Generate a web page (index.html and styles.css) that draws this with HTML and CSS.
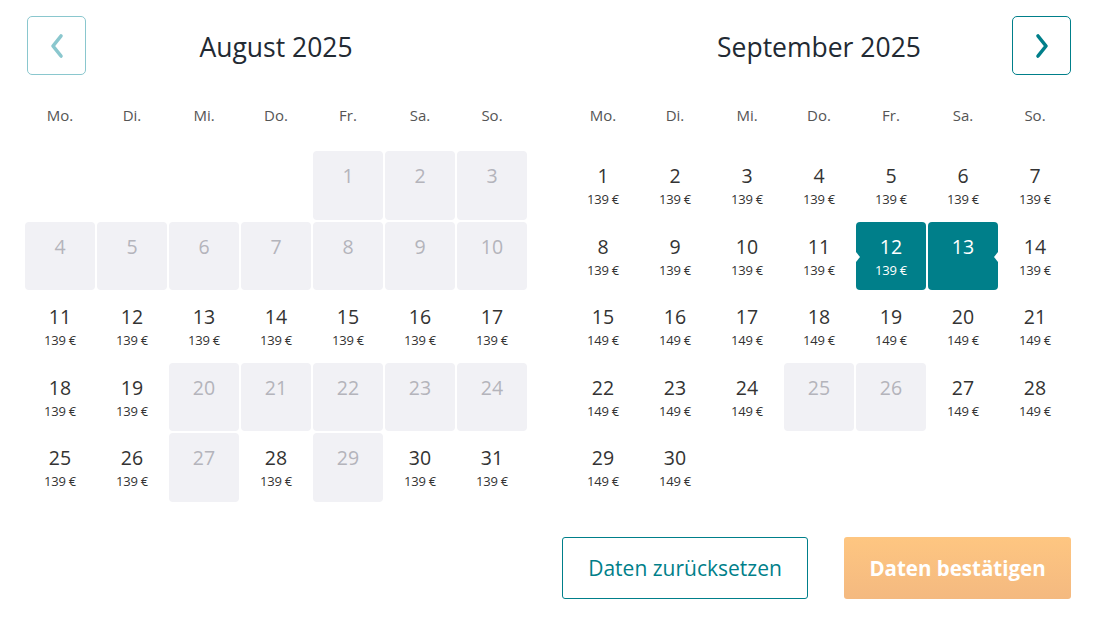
FILE: index.html
```html
<!DOCTYPE html>
<html>
<head>
    <meta charset="utf-8" />
    <title>Datum wählen</title>
    <link rel="stylesheet" href="styles.css">
</head>
<body>
    <div class="picker">
        <div class="months">
            <div class="month">
                <div class="kopf">
                    <button class="nav nav-prev" aria-label="Vorheriger Monat">
                        <svg width="16" height="26" viewBox="0 0 16 26"><path d="M12 3 L4 13 L12 23" fill="none" stroke="currentColor" stroke-width="3.6" stroke-linecap="round" stroke-linejoin="round"/></svg>
                    </button>
                    <div class="titel">August 2025</div>
                    <div class="platz"></div>
                </div>
                <div class="wochentage">
                    <span>Mo.</span><span>Di.</span><span>Mi.</span><span>Do.</span><span>Fr.</span><span>Sa.</span><span>So.</span>
                </div>
                <div class="tage" id="august"></div>
            </div>
            <div class="month">
                <div class="kopf">
                    <div class="platz"></div>
                    <div class="titel">September 2025</div>
                    <button class="nav nav-next" aria-label="Nächster Monat">
                        <svg width="16" height="26" viewBox="0 0 16 26"><path d="M4 3 L12 13 L4 23" fill="none" stroke="currentColor" stroke-width="3.6" stroke-linecap="round" stroke-linejoin="round"/></svg>
                    </button>
                </div>
                <div class="wochentage">
                    <span>Mo.</span><span>Di.</span><span>Mi.</span><span>Do.</span><span>Fr.</span><span>Sa.</span><span>So.</span>
                </div>
                <div class="tage" id="september"></div>
            </div>
        </div>
        <div class="aktionen">
            <button class="knopf knopf-reset">Daten zurücksetzen</button>
            <button class="knopf knopf-ok">Daten bestätigen</button>
        </div>
    </div>
    <script src="script.js"></script>
</body>
</html>
```

FILE: styles.css
```css
* {
    box-sizing: border-box;
}

html {
    font-family: "Open Sans", "Noto Sans", sans-serif;
    background-color: #ffffff;
    color: #333333;
}

body {
    margin: 0;
}

.picker {
    padding: 16px 45px 0 24px;
}

.months {
    display: flex;
    gap: 39px;
}

.month {
    width: 504px;
}

.kopf {
    display: grid;
    grid-template-columns: 62px 1fr 62px;
    align-items: center;
    height: 59px;
}

.titel {
    text-align: center;
    font-size: 26.5px;
    color: #222a33;
    padding-top: 3px;
}

.nav {
    width: 59px;
    height: 59px;
    background: #ffffff;
    border: 1px solid #007f8a;
    border-radius: 5px;
    color: #007f8a;
    display: flex;
    align-items: center;
    justify-content: center;
    padding: 0;
    cursor: pointer;
}

.nav-prev {
    margin-left: 3px;
    border-color: #8ac7ce;
    color: #8ac7ce;
}

.nav-next {
    margin-left: 3px;
}

.wochentage {
    display: grid;
    grid-template-columns: repeat(7, 72px);
    margin-top: 27px;
    height: 26px;
    align-items: center;
}

.wochentage span {
    text-align: center;
    font-size: 15px;
    color: #555555;
}

.tage {
    display: grid;
    grid-template-columns: repeat(7, 70px);
    grid-auto-rows: 68.5px;
    gap: 2px;
    padding-left: 1px;
    margin-top: 23px;
}

.tag {
    position: relative;
    border-radius: 4px;
    text-align: center;
    padding-top: 11px;
}

.tag .zahl {
    display: block;
    font-size: 19.5px;
    line-height: 28px;
    color: #333333;
}

.tag .preis {
    display: block;
    font-size: 13px;
    line-height: 18px;
    color: #333333;
    letter-spacing: -0.2px;
}

.tag.gesperrt {
    background-color: #f1f1f5;
}

.tag.gesperrt .zahl {
    color: #b4b4bb;
}

.tag.gewaehlt {
    background-color: #007f8a;
}

.tag.gewaehlt .zahl,
.tag.gewaehlt .preis {
    color: #ffffff;
}

.tag.start::before,
.tag.ende::after {
    content: "";
    position: absolute;
    top: 30px;
    width: 0;
    height: 0;
    border-top: 5px solid transparent;
    border-bottom: 5px solid transparent;
}

.tag.start::before {
    left: 0;
    border-left: 4px solid #ffffff;
}

.tag.ende::after {
    right: 0;
    border-right: 4px solid #ffffff;
}

.aktionen {
    display: flex;
    justify-content: flex-end;
    gap: 36px;
    margin-top: 35px;
}

.knopf {
    height: 62px;
    border-radius: 3px;
    font-family: "Open Sans", "Noto Sans", sans-serif;
    font-size: 21px;
    cursor: pointer;
}

.knopf-reset {
    width: 246px;
    background: #ffffff;
    border: 1px solid #007f8a;
    color: #007f8a;
}

.knopf-ok {
    width: 227px;
    border: none;
    background: linear-gradient(#fec681, #f4b980);
    color: #ffffff;
    font-weight: 700;
    font-size: 20.5px;
}
```

FILE: script.js
```javascript
function monatBauen(id, leer, anzahl, gesperrt, preis, gewaehlt) {
    var ziel = document.getElementById(id);
    var html = "";
    for (var i = 0; i < leer; i++) {
        html += "<div></div>";
    }
    for (var t = 1; t <= anzahl; t++) {
        var klasse = "tag";
        var inhalt = "<span class=\"zahl\">" + t + "</span>";
        if (gesperrt.indexOf(t) >= 0) {
            klasse += " gesperrt";
        } else {
            if (gewaehlt[0] === t) klasse += " gewaehlt start";
            if (gewaehlt[1] === t) klasse += " gewaehlt ende";
            if (gewaehlt[1] !== t) {
                inhalt += "<span class=\"preis\">" + preis(t) + " €</span>";
            }
        }
        html += "<div class=\"" + klasse + "\">" + inhalt + "</div>";
    }
    ziel.innerHTML = html;
}

monatBauen("august", 4, 31,
    [1, 2, 3, 4, 5, 6, 7, 8, 9, 10, 20, 21, 22, 23, 24, 27, 29],
    function () { return 139; }, []);

monatBauen("september", 0, 30,
    [25, 26],
    function (t) { return t <= 14 ? 139 : 149; }, [12, 13]);
```
